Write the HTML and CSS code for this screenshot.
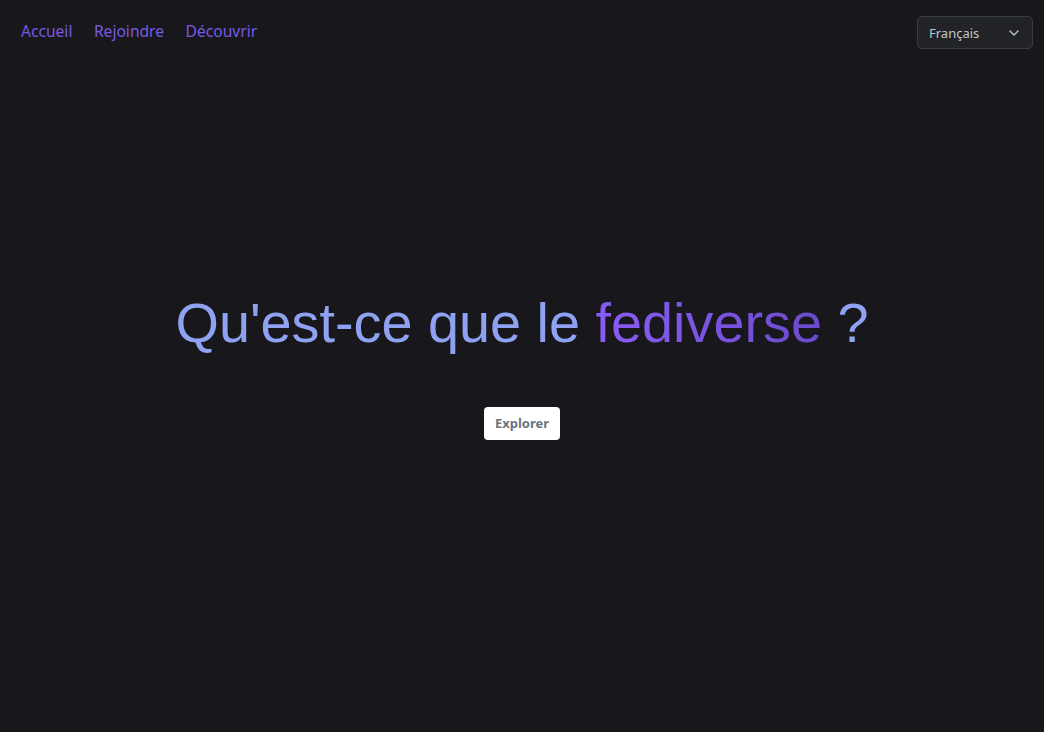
FILE: index.html
```html
<!DOCTYPE html>
<html lang="fr">
<head>
<meta charset="utf-8">
<title>Fediverse</title>
<link rel="stylesheet" href="styles.css">
</head>
<body>
<header class="topbar">
  <nav class="nav">
    <a class="nav-link" href="#">Accueil</a>
    <a class="nav-link" href="#">Rejoindre</a>
    <a class="nav-link" href="#">Découvrir</a>
  </nav>
  <div class="lang">
    <span class="lang-label">Français</span>
    <svg class="lang-caret" width="12" height="12" viewBox="0 0 12 12" aria-hidden="true"><path d="M2 4l4 4 4-4" fill="none" stroke="#c0c4c8" stroke-width="1.4" stroke-linecap="round" stroke-linejoin="round"/></svg>
  </div>
</header>
<main class="hero">
  <h1 class="title">Qu'est-ce que le <span class="grad">fediverse</span> ?</h1>
  <a class="btn" href="#">Explorer</a>
</main>
</body>
</html>
```
FILE: styles.css
```css
html, body {
  margin: 0;
  padding: 0;
  background: #18181c;
  height: 100%;
}
body {
  font-family: "Noto Sans", "Open Sans", sans-serif;
  display: flex;
  flex-direction: column;
}
.topbar {
  display: flex;
  justify-content: space-between;
  align-items: flex-start;
  padding: 16px 11px 0 21px;
}
.nav {
  display: flex;
  gap: 21.5px;
  padding-top: 4px;
}
.nav-link {
  color: #7858e0;
  text-decoration: none;
  font-size: 15.6px;
  line-height: 22px;
}
.lang {
  box-sizing: border-box;
  width: 116px;
  height: 33px;
  background: #212327;
  border: 1px solid #3a3d43;
  border-radius: 5px;
  display: flex;
  align-items: center;
  justify-content: space-between;
  padding: 0 12px 0 11px;
}
.lang-label {
  color: #c2c6cb;
  font-size: 13px;
}
.hero {
  display: flex;
  flex-direction: column;
  align-items: center;
  padding-top: 239px;
}
.title {
  margin: 0;
  font-family: "Liberation Sans", Arial, sans-serif;
  font-weight: 400;
  font-size: 55.8px;
  line-height: 70px;
  color: #8fa2f2;
}
.grad {
  background: linear-gradient(90deg, #8b5cf6, #6a4bcc);
  -webkit-background-clip: text;
  background-clip: text;
  color: transparent;
}
.btn {
  margin-top: 49px;
  background: #ffffff;
  color: #6b7280;
  font-weight: 700;
  font-size: 13px;
  text-decoration: none;
  border-radius: 4px;
  padding: 7px 11px;
  line-height: 19px;
}
```
